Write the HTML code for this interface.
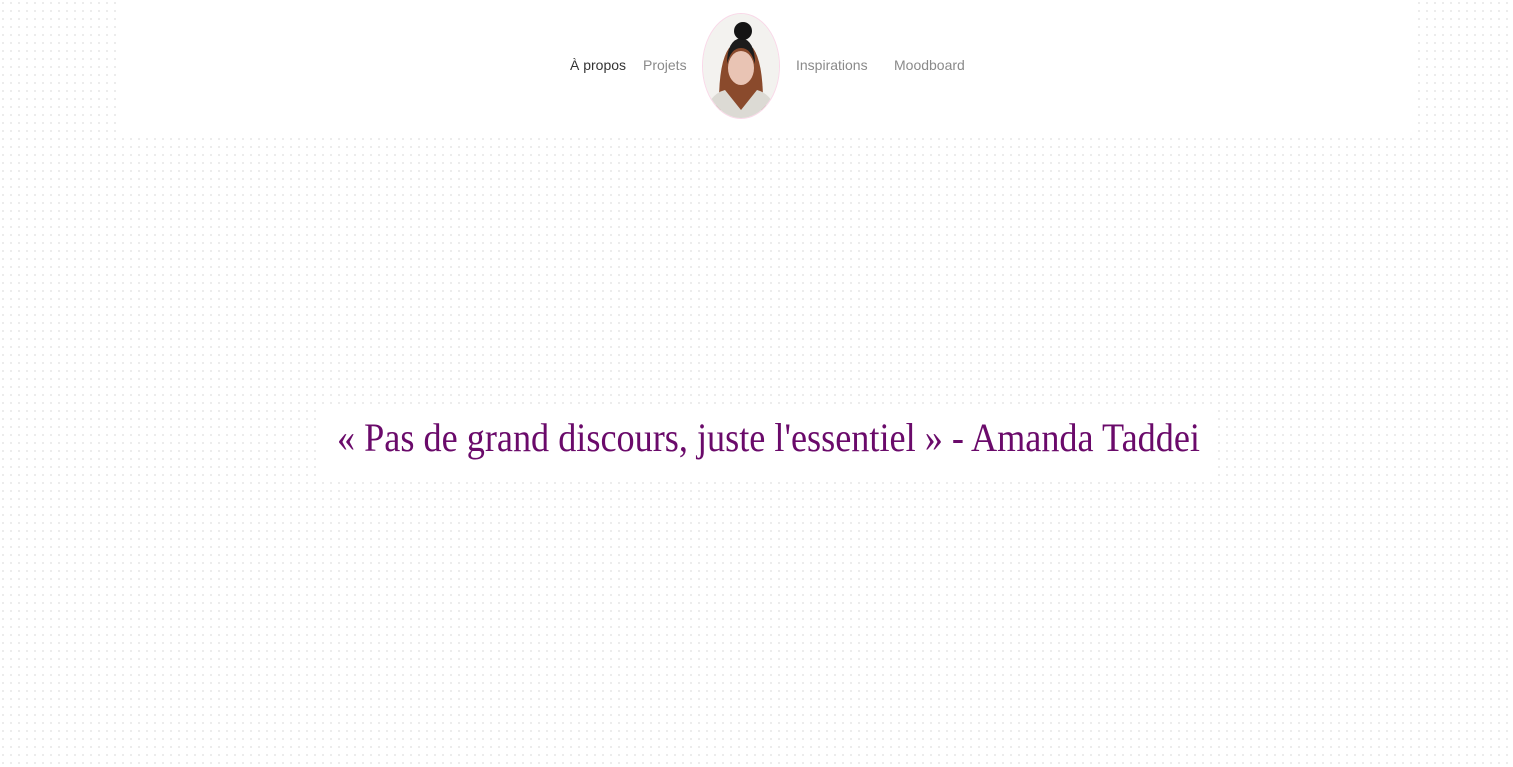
<!DOCTYPE html>
<html><head><meta charset="utf-8"><style>
html,body{margin:0;padding:0;width:1513px;height:767px;overflow:hidden}
body{background-color:#fff;background-image:radial-gradient(circle,#d2d2d2 0.6px,transparent 0.9px);background-size:8px 8px;background-position:-1px -1px;font-family:"Liberation Sans",sans-serif;position:relative}
.head{position:absolute;left:120px;top:0;width:1298px;height:134px;background:#fff}
.nav{position:absolute;top:57px;font-size:14px;color:#8a8a8a;white-space:nowrap}
.oval{position:absolute;left:702px;top:13px;width:76px;height:104px;border:1.5px solid #f9d8e8;border-radius:50%;background:#f4f2ef;overflow:hidden}
.q{position:absolute;left:320px;top:405px;width:895px;height:73px;background:#fff}
.qt{position:absolute;left:337px;top:414px;font-family:"Liberation Serif",serif;font-size:40px;color:#6a0a6a;white-space:nowrap;transform-origin:left top}
</style></head><body>
<div class="head"></div>
<div class="nav" style="left:570px;color:#333">À propos</div>
<div class="nav" style="left:643px">Projets</div>
<div class="nav" style="left:796px">Inspirations</div>
<div class="nav" style="left:894px">Moodboard</div>
<div class="oval">
<svg width="76" height="104" viewBox="0 0 76 104">
<rect width="76" height="104" fill="#f3f2ef"/>
<path d="M16 88 Q16 48 26 34 Q38 26 50 34 Q60 48 60 88 Q64 94 70 96 L6 96 Q12 94 16 88Z" fill="#8a4a2c"/>
<ellipse cx="38" cy="54" rx="13" ry="17" fill="#e9c4b4"/>
<path d="M24 50 Q24 26 38 24 Q52 26 52 50 Q48 34 38 34 Q28 34 24 50Z" fill="#1c1c1c"/>
<circle cx="40" cy="17" r="9" fill="#141414"/>
<path d="M0 104 Q6 80 22 76 L38 96 L54 76 Q70 80 76 104Z" fill="#dcdad4"/>
</svg>
</div>
<div class="q"></div>
<div class="qt" id="qt">« Pas de grand discours, juste l'essentiel » - Amanda Taddei</div>
<script>
var e=document.getElementById('qt');var w=e.getBoundingClientRect().width;e.style.transform='scaleX('+(863/w)+')';
</script>
</body></html>
